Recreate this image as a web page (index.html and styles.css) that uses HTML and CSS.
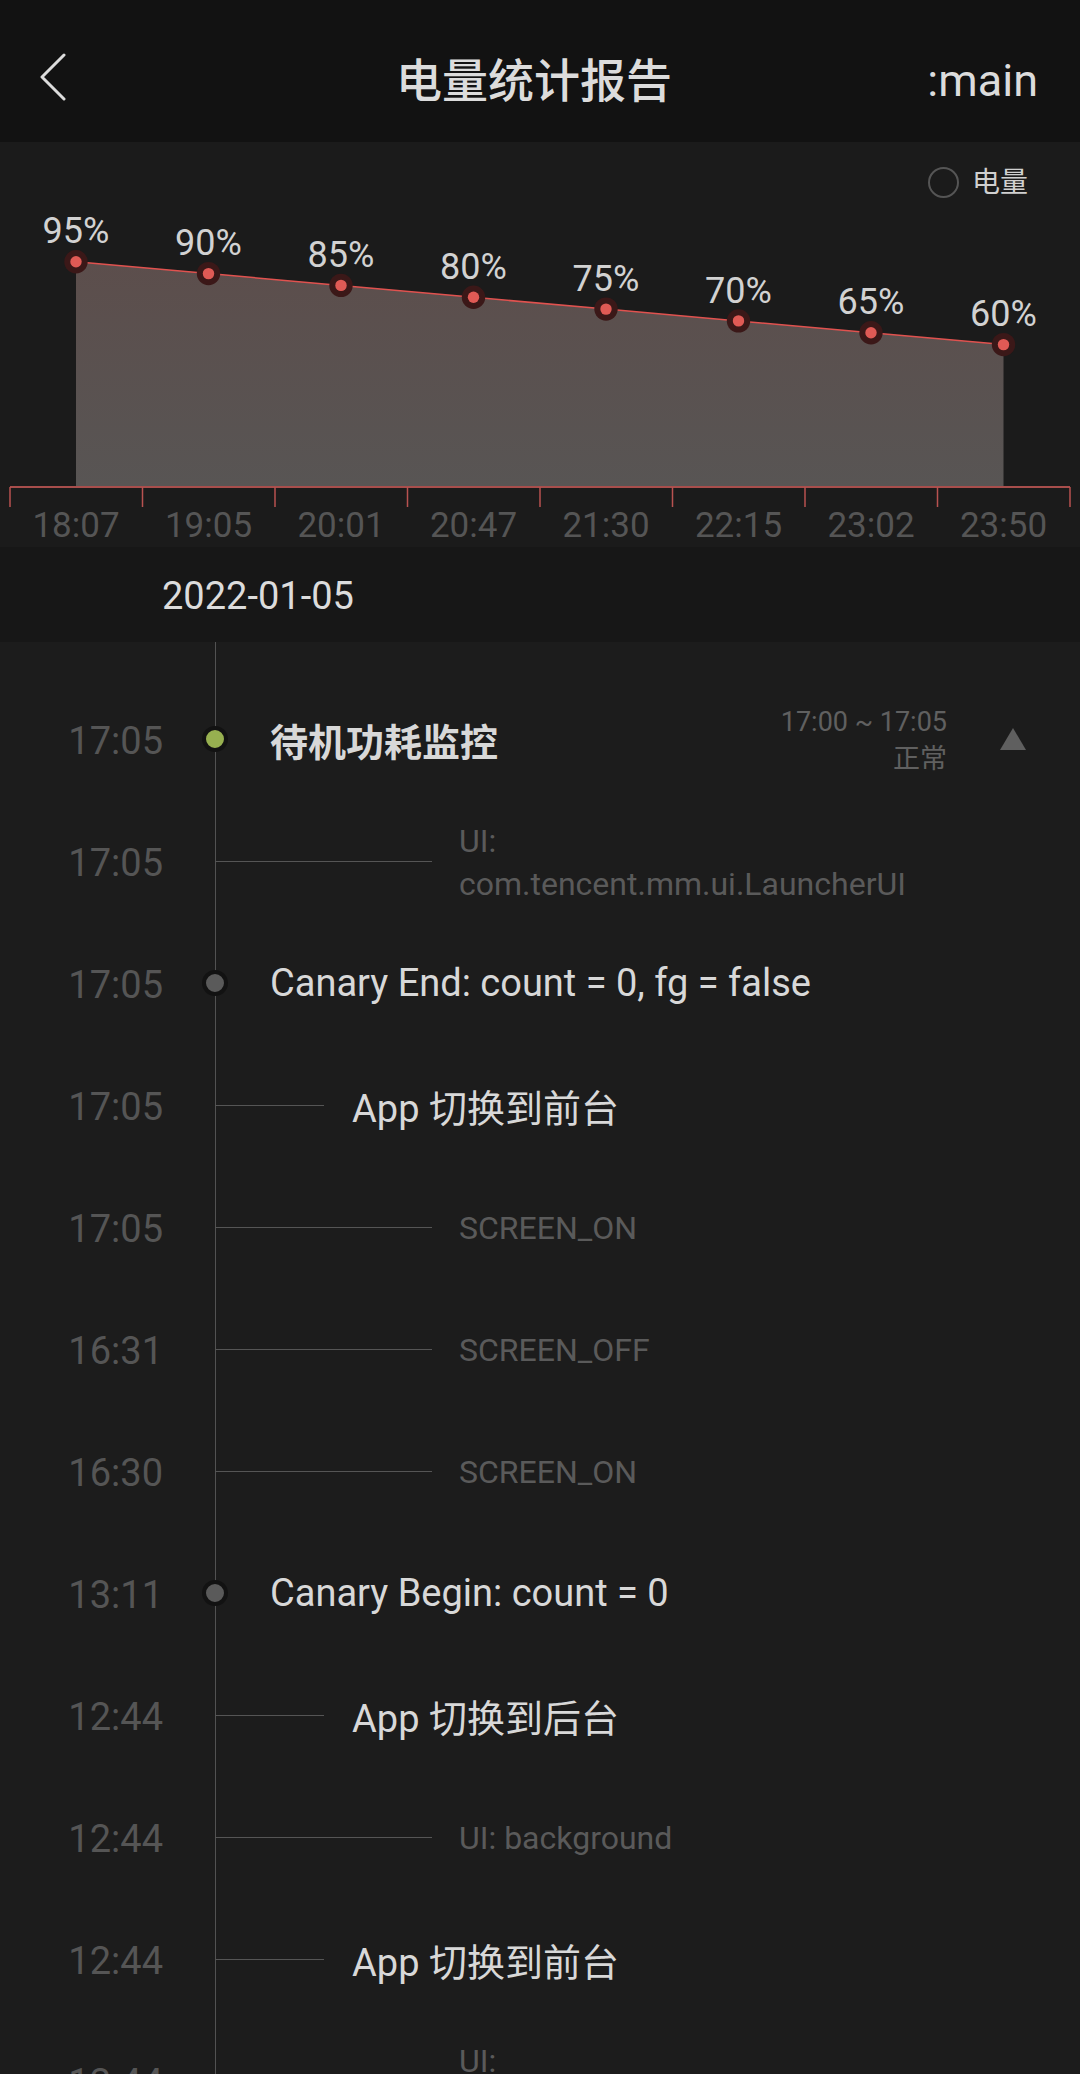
FILE: index.html
```html
<!DOCTYPE html>
<html lang="zh-CN">
<head>
<meta charset="utf-8">
<title>电量统计报告</title>
<link rel="stylesheet" href="styles.css">
</head>
<body>
<div class="app">
  <header class="topbar">
    <svg class="back" viewBox="0 0 26 48" width="26" height="48" aria-hidden="true">
      <polyline points="24,2 2,24 24,46" fill="none" stroke="#dcdcdc" stroke-width="3" stroke-linecap="round" stroke-linejoin="round"/>
    </svg>
    <h1 class="title">电量统计报告</h1>
    <span class="proc">:main</span>
  </header>

  <section class="chart">
    <svg class="plot" viewBox="0 0 1080 405" width="1080" height="405">
      <defs>
        <linearGradient id="fillg" x1="0" y1="0" x2="0" y2="1">
          <stop offset="0" stop-color="#5c4e4c"/>
          <stop offset="1" stop-color="#585554"/>
        </linearGradient>
      </defs>
      <polygon points="76,345 76,119.7 208.5,131.6 341,143.4 473.5,155.3 606,167.1 738.5,178.9 871,190.8 1003.5,202.6 1003.5,345" fill="url(#fillg)"/>
      <polyline points="76,119.7 208.5,131.6 341,143.4 473.5,155.3 606,167.1 738.5,178.9 871,190.8 1003.5,202.6" fill="none" stroke="#e0524f" stroke-width="1.5"/>
      <line x1="10" y1="345" x2="1070" y2="345" stroke="#a84e4c" stroke-width="2"/>
      <path d="M10 345V365M142.5 345V365M275 345V365M407.5 345V365M540 345V365M672.5 345V365M805 345V365M937.5 345V365M1070 345V365" stroke="#b85250" stroke-width="1.5" fill="none"/>
      <g class="dots">
        <circle cx="76" cy="119.7" r="11.7" class="halo"/><circle cx="76" cy="119.7" r="5.7" class="core"/>
        <circle cx="208.5" cy="131.6" r="11.7" class="halo"/><circle cx="208.5" cy="131.6" r="5.7" class="core"/>
        <circle cx="341" cy="143.4" r="11.7" class="halo"/><circle cx="341" cy="143.4" r="5.7" class="core"/>
        <circle cx="473.5" cy="155.3" r="11.7" class="halo"/><circle cx="473.5" cy="155.3" r="5.7" class="core"/>
        <circle cx="606" cy="167.1" r="11.7" class="halo"/><circle cx="606" cy="167.1" r="5.7" class="core"/>
        <circle cx="738.5" cy="178.9" r="11.7" class="halo"/><circle cx="738.5" cy="178.9" r="5.7" class="core"/>
        <circle cx="871" cy="190.8" r="11.7" class="halo"/><circle cx="871" cy="190.8" r="5.7" class="core"/>
        <circle cx="1003.5" cy="202.6" r="11.7" class="halo"/><circle cx="1003.5" cy="202.6" r="5.7" class="core"/>
      </g>
      <g class="pct">
        <text x="76" y="101.3">95%</text>
        <text x="208.5" y="113.2">90%</text>
        <text x="341" y="125">85%</text>
        <text x="473.5" y="136.9">80%</text>
        <text x="606" y="148.7">75%</text>
        <text x="738.5" y="160.5">70%</text>
        <text x="871" y="172.4">65%</text>
        <text x="1003.5" y="184.2">60%</text>
      </g>
      <g class="axis-label">
        <text x="76" y="394.7">18:07</text>
        <text x="208.5" y="394.7">19:05</text>
        <text x="341" y="394.7">20:01</text>
        <text x="473.5" y="394.7">20:47</text>
        <text x="606" y="394.7">21:30</text>
        <text x="738.5" y="394.7">22:15</text>
        <text x="871" y="394.7">23:02</text>
        <text x="1003.5" y="394.7">23:50</text>
      </g>
    </svg>
    <div class="legend"><span class="legend-mark"></span><span>电量</span></div>
  </section>

  <div class="date-row">2022-01-05</div>

  <main class="timeline">
    <div class="row">
      <span class="time">17:05</span>
      <span class="dot ok"></span>
      <span class="main strong">待机功耗监控</span>
      <div class="meta"><div>17:00 ~ 17:05</div><div>正常</div></div>
      <span class="caret"></span>
    </div>
    <div class="row">
      <span class="time">17:05</span>
      <span class="branch long"></span>
      <span class="note">UI: com.tencent.mm.ui.LauncherUI</span>
    </div>
    <div class="row">
      <span class="time">17:05</span>
      <span class="dot"></span>
      <span class="main">Canary End: count = 0, fg = false</span>
    </div>
    <div class="row">
      <span class="time">17:05</span>
      <span class="branch"></span>
      <span class="event">App 切换到前台</span>
    </div>
    <div class="row">
      <span class="time">17:05</span>
      <span class="branch long"></span>
      <span class="note">SCREEN_ON</span>
    </div>
    <div class="row">
      <span class="time">16:31</span>
      <span class="branch long"></span>
      <span class="note">SCREEN_OFF</span>
    </div>
    <div class="row">
      <span class="time">16:30</span>
      <span class="branch long"></span>
      <span class="note">SCREEN_ON</span>
    </div>
    <div class="row">
      <span class="time">13:11</span>
      <span class="dot"></span>
      <span class="main">Canary Begin: count = 0</span>
    </div>
    <div class="row">
      <span class="time">12:44</span>
      <span class="branch"></span>
      <span class="event">App 切换到后台</span>
    </div>
    <div class="row">
      <span class="time">12:44</span>
      <span class="branch long"></span>
      <span class="note">UI: background</span>
    </div>
    <div class="row">
      <span class="time">12:44</span>
      <span class="branch"></span>
      <span class="event">App 切换到前台</span>
    </div>
    <div class="row">
      <span class="time">12:44</span>
      <span class="branch long"></span>
      <span class="note">UI: com.tencent.mm.ui.LauncherUI</span>
    </div>
  </main>
</div>
</body>
</html>
```

FILE: styles.css
```css
* {
  box-sizing: border-box;
  margin: 0;
  padding: 0;
}

html,
body {
  width: 1080px;
  height: 2074px;
  overflow: hidden;
  background: #1c1c1c;
}

body {
  font-family: Roboto, "Noto Sans CJK SC", sans-serif;
  color: #d8d8d8;
}

.app {
  width: 1080px;
}

/* ---------- top bar ---------- */
.topbar {
  height: 142px;
  background: #121212;
  display: grid;
  grid-template-columns: 1fr auto 1fr;
  align-items: center;
  padding: 20px 12px 0 0;
}

.back {
  margin-left: 40px;
  margin-top: -8px;
  display: block;
}

.title {
  font-size: 46px;
  font-weight: 500;
  line-height: 46px;
  color: #dcdcdc;
}

.proc {
  justify-self: end;
  margin-right: 30px;
  font-size: 45px;
  line-height: 46px;
  color: #dcdcdc;
}

/* ---------- chart ---------- */
.chart {
  height: 405px;
  background: #1b1b1b;
  display: grid;
}

.chart > * {
  grid-area: 1 / 1;
}

.plot {
  display: block;
}

.halo {
  fill: #3b1818;
}

.core {
  fill: #e05a55;
}

.pct text {
  font-size: 36px;
  fill: #d2d2d2;
  text-anchor: middle;
}

.axis-label text {
  font-size: 35px;
  fill: #555555;
  text-anchor: middle;
}

.legend {
  justify-self: end;
  align-self: start;
  margin: 25px 52px 0 0;
  display: flex;
  align-items: center;
  gap: 13px;
  font-size: 28px;
  line-height: 31px;
  color: #d0d0d0;
}

.legend-mark {
  width: 31px;
  height: 31px;
  border: 2px solid #555;
  border-radius: 50%;
}

/* ---------- date ---------- */
.date-row {
  height: 95px;
  background: #171717;
  display: flex;
  align-items: center;
  padding: 3px 0 0 162px;
  font-size: 38px;
  color: #dcdcdc;
}

/* ---------- timeline ---------- */
.timeline {
  background: linear-gradient(#525252, #525252) 215px 0 / 1px 100% no-repeat, #1c1c1c;
  padding-top: 36px;
}

.row {
  height: 122px;
  display: flex;
  align-items: center;
}

.time {
  width: 163px;
  flex: none;
  text-align: right;
  font-size: 38px;
  line-height: 1;
  color: #555555;
  padding-top: 3px;
}

.dot {
  flex: none;
  margin-left: 39px;
  width: 26px;
  height: 26px;
  border-radius: 50%;
  border: 4.5px solid #121212;
  background: #5a5a5a;
}

.dot.ok {
  background: #97b050;
}

.main {
  margin-left: 42px;
  font-size: 38px;
  color: #d8d8d8;
  white-space: nowrap;
}

.main.strong {
  font-weight: 700;
}

.branch {
  flex: none;
  margin-left: 52px;
  width: 109px;
  height: 1px;
  background: #555555;
}

.branch.long {
  width: 217px;
}

.event {
  margin-left: 28px;
  font-size: 38px;
  color: #d8d8d8;
  white-space: nowrap;
}

.note {
  margin-left: 27px;
  max-width: 470px;
  font-size: 32px;
  line-height: 43px;
  color: #5a5a5a;
  padding-top: 3px;
}

.meta {
  margin-left: auto;
  text-align: right;
  font-size: 27px;
  line-height: 37px;
  color: #606060;
  padding-top: 3px;
}

.caret {
  flex: none;
  margin: 0 54px 0 53px;
  width: 26px;
  height: 22px;
  background: #5f5f5f;
  clip-path: polygon(50% 0, 100% 100%, 0 100%);
}
```
